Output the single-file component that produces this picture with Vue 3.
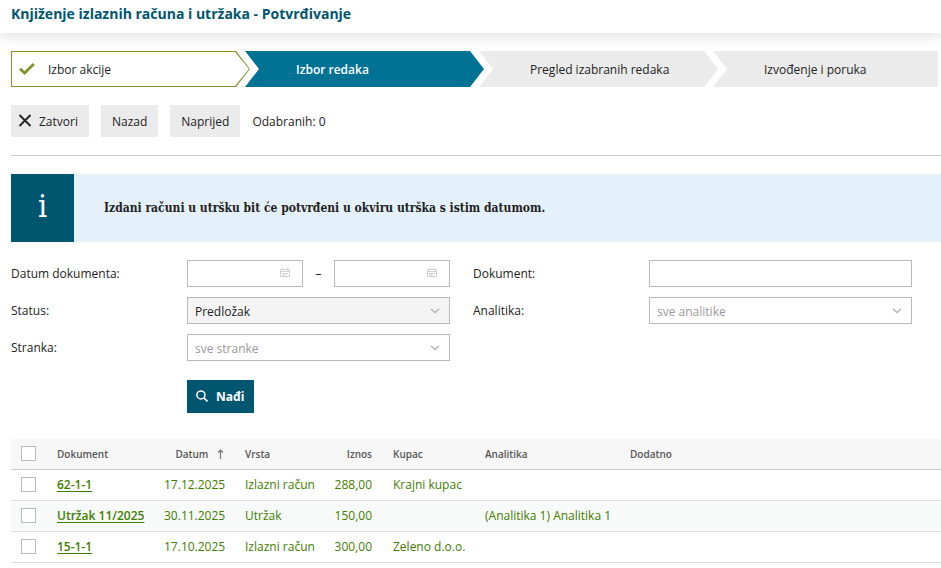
<script setup>
import { ref, computed } from 'vue'

const steps = [
  { label: 'Izbor akcije', state: 'done' },
  { label: 'Izbor redaka', state: 'current' },
  { label: 'Pregled izabranih redaka', state: 'next' },
  { label: 'Izvođenje i poruka', state: 'next' },
]

const rows = [
  { id: 1, document: '62-1-1', date: '17.12.2025', type: 'Izlazni račun', amount: '288,00', customer: 'Krajni kupac', analytics: '', extra: '' },
  { id: 2, document: 'Utržak 11/2025', date: '30.11.2025', type: 'Utržak', amount: '150,00', customer: '', analytics: '(Analitika 1) Analitika 1', extra: '' },
  { id: 3, document: '15-1-1', date: '17.10.2025', type: 'Izlazni račun', amount: '300,00', customer: 'Zeleno d.o.o.', analytics: '', extra: '' },
]

const selected = ref([])
const allSelected = computed({
  get: () => selected.value.length === rows.length,
  set: (on) => { selected.value = on ? rows.map((r) => r.id) : [] },
})

const filter = ref({ from: '', to: '', document: '', status: 'draft', analytics: '', party: '' })
</script>

<template>
  <div class="page">
    <header class="titlebar">
      <h1>Knjiženje izlaznih računa i utržaka - Potvrđivanje</h1>
    </header>

    <ol class="steps">
      <li v-for="step in steps" :key="step.label" class="step" :class="step.state">
        <svg v-if="step.state === 'done'" class="check" viewBox="0 0 16 12" width="16" height="12" aria-hidden="true">
          <path d="M1 5.8 5.6 10 14.8 1" fill="none" stroke="#83922a" stroke-width="2.8" />
        </svg>
        <span>{{ step.label }}</span>
      </li>
    </ol>

    <div class="toolbar">
      <button type="button" class="btn">
        <svg viewBox="0 0 14 14" width="14" height="14" aria-hidden="true">
          <path d="M1.5 1 12.5 12M12.5 1 1.5 12" fill="none" stroke="#222" stroke-width="1.9" />
        </svg>
        Zatvori
      </button>
      <button type="button" class="btn">Nazad</button>
      <button type="button" class="btn">Naprijed</button>
      <span class="count">Odabranih: {{ selected.length }}</span>
    </div>

    <div class="notice">
      <span class="notice-icon" aria-hidden="true">i</span>
      <p>Izdani računi u utršku bit će potvrđeni u okviru utrška s istim datumom.</p>
    </div>

    <form class="filters" @submit.prevent>
      <label for="date-from">Datum dokumenta:</label>
      <div class="range">
        <div class="control">
          <input id="date-from" v-model="filter.from" type="text">
          <svg class="calendar" viewBox="0 0 10 10" width="10" height="10" aria-hidden="true">
            <path d="M.5 1.5h9v7h-9zM0 3.5h10M2.5 0v2M7.5 0v2M2 5.5h6M2 7h4" fill="none" stroke="#cfcfcb" />
          </svg>
        </div>
        <span class="dash">–</span>
        <div class="control">
          <input id="date-to" v-model="filter.to" type="text" aria-label="Datum dokumenta do">
          <svg class="calendar" viewBox="0 0 10 10" width="10" height="10" aria-hidden="true">
            <path d="M.5 1.5h9v7h-9zM0 3.5h10M2.5 0v2M7.5 0v2M2 5.5h6M2 7h4" fill="none" stroke="#cfcfcb" />
          </svg>
        </div>
      </div>

      <label class="second" for="document">Dokument:</label>
      <div class="control"><input id="document" v-model="filter.document" type="text"></div>

      <label for="status">Status:</label>
      <div class="control">
        <select id="status" v-model="filter.status" class="filled">
          <option value="draft">Predložak</option>
        </select>
        <svg class="chevron" viewBox="0 0 10 6" width="10" height="6" aria-hidden="true">
          <path d="M1 1 5 4.6 9 1" fill="none" stroke="#b5b5b5" stroke-width="1.5" />
        </svg>
      </div>

      <label class="second" for="analytics">Analitika:</label>
      <div class="control">
        <select id="analytics" v-model="filter.analytics">
          <option value="">sve analitike</option>
        </select>
        <svg class="chevron" viewBox="0 0 10 6" width="10" height="6" aria-hidden="true">
          <path d="M1 1 5 4.6 9 1" fill="none" stroke="#b5b5b5" stroke-width="1.5" />
        </svg>
      </div>

      <label for="party">Stranka:</label>
      <div class="control">
        <select id="party" v-model="filter.party">
          <option value="">sve stranke</option>
        </select>
        <svg class="chevron" viewBox="0 0 10 6" width="10" height="6" aria-hidden="true">
          <path d="M1 1 5 4.6 9 1" fill="none" stroke="#b5b5b5" stroke-width="1.5" />
        </svg>
      </div>

      <button type="submit" class="find">
        <svg viewBox="0 0 12 14" width="12" height="14" aria-hidden="true">
          <circle cx="4.9" cy="4.9" r="4" fill="none" stroke="#fff" stroke-width="1.5" />
          <path d="M7.8 7.8 11.5 11.5" stroke="#fff" stroke-width="1.7" />
        </svg>
        Nađi
      </button>
    </form>

    <table class="grid">
      <colgroup>
        <col class="c-check"><col class="c-doc"><col class="c-date"><col class="c-type">
        <col class="c-amount"><col class="c-customer"><col class="c-analytics"><col>
      </colgroup>
      <thead>
        <tr>
          <th><input v-model="allSelected" type="checkbox" aria-label="Odaberi sve"></th>
          <th>Dokument</th>
          <th class="num">
            Datum
            <svg class="sort" viewBox="0 0 7 10" width="7" height="10" aria-hidden="true">
              <path d="M3.5 10V1M1 3.5 3.5 1 6 3.5" fill="none" stroke="#777" stroke-width="1.2" />
            </svg>
          </th>
          <th>Vrsta</th>
          <th class="num">Iznos</th>
          <th>Kupac</th>
          <th>Analitika</th>
          <th>Dodatno</th>
        </tr>
      </thead>
      <tbody>
        <tr v-for="row in rows" :key="row.id">
          <td><input v-model="selected" type="checkbox" :value="row.id" :aria-label="row.document"></td>
          <td><a href="#">{{ row.document }}</a></td>
          <td class="num">{{ row.date }}</td>
          <td>{{ row.type }}</td>
          <td class="num">{{ row.amount }}</td>
          <td>{{ row.customer }}</td>
          <td>{{ row.analytics }}</td>
          <td>{{ row.extra }}</td>
        </tr>
      </tbody>
    </table>
  </div>
</template>

<style>
body {
  margin: 0;
  background: #fff;
}
</style>

<style scoped>
.page,
.page * {
  box-sizing: border-box;
}

.page {
  color: #222;
  font: 500 12px/16px "Open Sans", "Noto Sans", sans-serif;
  overflow-x: hidden;
}

.page button,
.page input,
.page select {
  font: inherit;
  color: inherit;
}

.titlebar {
  height: 33px;
  padding: 4px 11px 0;
  box-shadow: 0 1px 15px rgba(0, 0, 0, 0.17);
}

h1 {
  margin: 0;
  color: #00556f;
  font-size: 14px;
  font-weight: 700;
  line-height: 20px;
}

.steps {
  display: grid;
  grid-template-columns: repeat(3, 26fr) 25fr;
  margin: 18px 3px 0 11px;
  padding: 0;
  list-style: none;
}

.step {
  position: relative;
  display: flex;
  align-items: center;
  height: 36px;
  margin-right: -5px;
  padding: 2px 0 0 51px;
  background: #ebebeb;
  clip-path: polygon(0 0, calc(100% - 14px) 0, 100% 50%, calc(100% - 14px) 100%, 0 100%, 14px 50%);
}

.step.done {
  gap: 13px;
  padding-left: 8px;
  background: #83922a;
  clip-path: polygon(0 0, calc(100% - 14px) 0, 100% 50%, calc(100% - 14px) 100%, 0 100%);
}

.step.done::before {
  content: "";
  position: absolute;
  inset: 1px;
  background: #fff;
  clip-path: polygon(0 0, calc(100% - 14px) 0, 100% 50%, calc(100% - 14px) 100%, 0 100%);
}

.step.done > * {
  position: relative;
}

.check {
  margin-bottom: 2px;
}

.step.current {
  background: #007394;
  color: #fff;
  font-weight: 600;
}

.step:last-child {
  margin-right: 0;
  clip-path: polygon(0 0, 100% 0, 100% 100%, 0 100%, 14px 50%);
}

.toolbar {
  display: flex;
  align-items: center;
  gap: 12px;
  margin: 18px 0 0 11px;
  padding-bottom: 18px;
  border-bottom: 1px solid #ccc;
}

.btn {
  display: flex;
  align-items: center;
  gap: 7px;
  height: 32px;
  padding: 2px 11px 0;
  border: 0;
  background: #ebebeb;
}

.btn:has(svg) {
  padding-left: 7px;
}

.btn svg {
  margin-bottom: 2px;
}

.count {
  padding-top: 2px;
}

.notice {
  display: flex;
  align-items: stretch;
  height: 68px;
  margin: 18px 0 0 11px;
  background: #e4f1fa;
}

.notice-icon {
  display: flex;
  align-items: center;
  justify-content: center;
  width: 63px;
  padding-bottom: 4px;
  background: #00556f;
  color: #fff;
  font: 400 32px/32px "DejaVu Serif Condensed", "DejaVu Serif", serif;
}

.notice p {
  align-self: center;
  margin: 0;
  padding-left: 30px;
  font: 700 12px/16px "DejaVu Serif Condensed", "DejaVu Serif", serif;
}

.filters {
  display: grid;
  grid-template-columns: 176px minmax(0, 1fr) 199px minmax(0, 1fr);
  row-gap: 10px;
  align-items: center;
  margin: 18px 29px 0 11px;
}

.filters label {
  padding-top: 1px;
}

.second {
  padding-left: 23px;
}

.range {
  display: flex;
}

.range .control {
  flex: 1;
}

.dash {
  width: 31px;
  line-height: 27px;
  text-align: center;
}

.control {
  position: relative;
  min-width: 0;
}

.control input,
.control select {
  display: block;
  width: 100%;
  height: 27px;
  padding: 2px 7px 0;
  border: 1px solid #b8babd;
  border-radius: 0;
  background: #fff;
  outline: 0;
}

.control select {
  appearance: none;
  color: #999;
  font-weight: 400;
}

.control select.filled {
  background: #f4f4f4;
  color: #222;
}

.calendar {
  position: absolute;
  top: 8px;
  right: 13px;
}

.chevron {
  position: absolute;
  top: 11px;
  right: 10px;
}

.find {
  display: flex;
  grid-column: 2;
  align-items: center;
  justify-self: start;
  gap: 8px;
  height: 33px;
  margin-top: 9px;
  padding: 0 10px 0 9px;
  border: 0;
  background: #00556f;
}

.page .find {
  color: #fff;
  font-weight: 700;
}

.grid {
  width: calc(100% - 11px);
  margin: 26px 0 0 11px;
  border-collapse: collapse;
  table-layout: fixed;
}

.c-check { width: 36px; }
.c-doc { width: 107px; }
.c-date { width: 81px; }
.c-type { width: 89px; }
.c-amount { width: 59px; }
.c-customer { width: 92px; }
.c-analytics { width: 145px; }

th,
td {
  padding: 0 10px;
  text-align: left;
  white-space: nowrap;
}

th {
  height: 30px;
  border-bottom: 1px solid #ccc;
  background: #f7f7f7;
  color: #555;
  font-size: 10px;
  font-weight: 600;
}

td {
  height: 31px;
  border-bottom: 1px solid #ddd;
  color: #3f7d00;
  font-weight: 400;
}

.num {
  padding-right: 11px;
  text-align: right;
}

.sort {
  margin-left: 6px;
  vertical-align: -1px;
}

tbody tr:nth-child(even) {
  background: #f8faf9;
}

td a {
  color: #3f7d00;
  font-weight: 600;
  text-underline-offset: 2px;
}

th input,
td input {
  display: block;
  width: 15px;
  height: 15px;
  margin: 0;
  border: 1px solid #b8babd;
  background: #fff;
  appearance: none;
}

th input:checked,
td input:checked {
  background: #3f7d00;
}
</style>
